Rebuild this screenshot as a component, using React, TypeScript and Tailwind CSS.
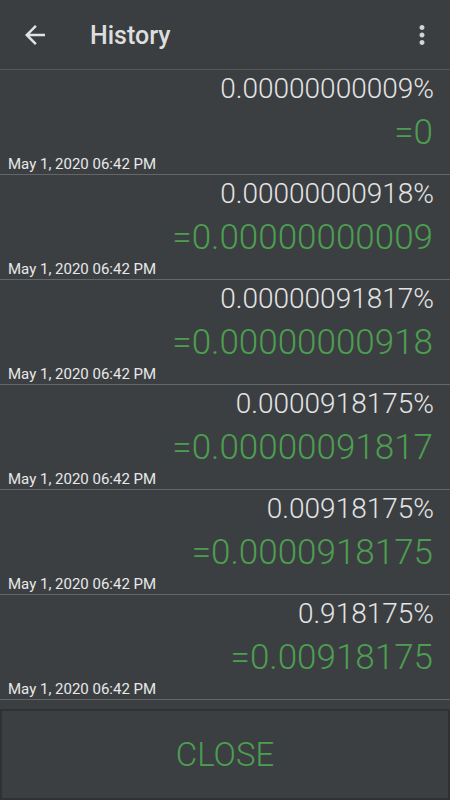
import React from "react";

const rows = [
  { expr: "0.00000000009%", result: "=0" },
  { expr: "0.00000000918%", result: "=0.00000000009" },
  { expr: "0.00000091817%", result: "=0.00000000918" },
  { expr: "0.0000918175%", result: "=0.00000091817" },
  { expr: "0.00918175%", result: "=0.0000918175" },
  { expr: "0.918175%", result: "=0.00918175" },
];

export default function App() {
  return (
    <div className="w-[450px] h-[800px] bg-[#3c3f42] flex flex-col overflow-hidden font-['Roboto',sans-serif]">
      {/* Toolbar */}
      <div className="h-[70px] shrink-0 flex items-center border-b border-[#55585b] bg-[#3b3e41]">
        <svg viewBox="0 0 24 24" className="w-[30px] h-[30px] ml-[20px]" fill="#e2e2e2">
          <path d="M20 11H7.83l5.59-5.59L12 4l-8 8 8 8 1.41-1.41L7.83 13H20v-2z" />
        </svg>
        <div className="ml-[40px] mt-[2px] text-[25px] font-medium text-[#dedede] leading-none">History</div>
        <svg viewBox="0 0 24 24" className="w-[30px] h-[30px] ml-auto mr-[13px]" fill="#d4d4d4">
          <path d="M12 8c1.1 0 2-.9 2-2s-.9-2-2-2-2 .9-2 2 .9 2 2 2zm0 2c-1.1 0-2 .9-2 2s.9 2 2 2 2-.9 2-2-.9-2-2-2zm0 6c-1.1 0-2 .9-2 2s.9 2 2 2 2-.9 2-2-.9-2-2-2z" />
        </svg>
      </div>

      {/* History list */}
      <div className="flex-1 overflow-hidden">
        {rows.map((r, i) => (
          <div key={i} className="h-[105px] border-b border-[#64676a] flex flex-col">
            <div className="pt-[5px] pr-[16px] text-right text-[28px] leading-[28px] font-light text-[#e4e4e4]">
              {r.expr}
            </div>
            <div className="mt-[12px] pr-[17px] text-right text-[35px] leading-[35px] font-light text-[#4c9e50]">
              {r.result}
            </div>
            <div className="mt-[7px] pl-[8px] text-[15px] leading-[15px] text-[#e8e8e8]">
              May 1, 2020 06:42 PM
            </div>
          </div>
        ))}
      </div>

      {/* Close button */}
      <div className="h-[91px] shrink-0 border-2 border-[#2f3134] bg-[#3c3f42] flex items-center justify-center">
        <span className="text-[33px] font-light text-[#4c9e50] leading-none">CLOSE</span>
      </div>
    </div>
  );
}
